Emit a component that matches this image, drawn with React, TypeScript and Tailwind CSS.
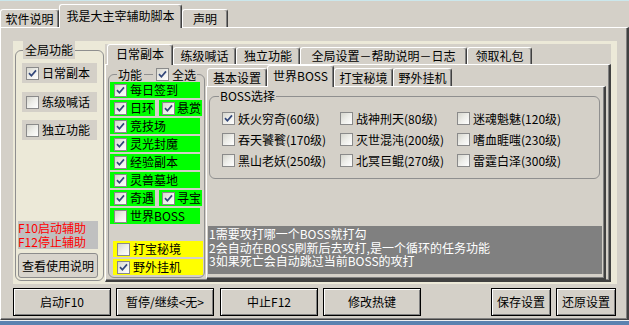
import React from "react";

const font = "font-['Noto_Sans_CJK_SC',sans-serif] text-[12px] leading-[14px]";

// classic sunken checkbox
const Check = ({ on }: { on?: boolean }) => (
  <span className="flex h-[13px] w-[13px] shrink-0 items-center justify-center border border-[#8a8a8a] bg-linear-to-br from-[#d6d6ce] via-[#eeeeea] to-white">
    {on && (
      <svg width="9" height="9" viewBox="0 0 9 9">
        <path d="M1 4.2 L3.4 6.8 L8 1.4" fill="none" stroke="#32477a" strokeWidth="1.7" />
      </svg>
    )}
  </span>
);

const Tab = ({ label, active, className }: { label: string; active?: boolean; className: string }) => (
  <div
    className={`${className} flex shrink-0 items-center justify-center whitespace-nowrap rounded-t-[3px] border-l border-t border-r border-white border-r-[#404040] bg-[#d4d0c8] shadow-[inset_-1px_0_0_#808080] ${
      active ? "relative z-10 -mb-px pb-[2px]" : ""
    }`}
  >
    {label}
  </div>
);

const panel =
  "border-l border-t border-r border-b border-white border-r-[#404040] border-b-[#404040] bg-[#d4d0c8] shadow-[inset_-1px_-1px_0_#808080]";

const Item = ({ label, on, className }: { label: string; on?: boolean; className: string }) => (
  <div className={`${className} flex h-[16px] items-center whitespace-nowrap`}>
    <Check on={on} />
    <span>{label}</span>
  </div>
);

const Btn = ({ label, className }: { label: string; className: string }) => (
  <div
    className={`${className} flex h-[28px] items-center justify-center border border-black bg-[#d4d0c8] shadow-[inset_1px_1px_0_#fff,inset_-1px_-1px_0_#808080]`}
  >
    {label}
  </div>
);

const bosses: [string, boolean][] = [
  ["妖火穷奇(60级)", true],
  ["战神刑天(80级)", false],
  ["迷魂魁魅(120级)", false],
  ["吞天饕餮(170级)", false],
  ["灭世混沌(200级)", false],
  ["嗜血睚嗤(230级)", false],
  ["黑山老妖(250级)", false],
  ["北冥巨鲲(270级)", false],
  ["雷霆白泽(300级)", false],
];

export default function App() {
  return (
    <div className={`${font} flex h-[325px] w-[629px] flex-col overflow-hidden bg-[#d4d0c8] text-black`}>
      <div className="h-px bg-[#cbe7ec]" />

      {/* outer tabs */}
      <div className="flex h-[26px] items-end">
        <Tab label="软件说明" className="h-[18px] w-[59px]" />
        <Tab label="我是大主宰辅助脚本" active className="h-[24px] w-[123px]" />
        <Tab label="声明" className="h-[18px] w-[46px]" />
      </div>

      <div className={`${panel} flex h-[293px] flex-col border-r-2 pl-[12px] pt-[13px]`}>
        <div className="flex h-[243px] w-[604px] bg-[#ece9d8] pl-[2px]">
          {/* 全局功能 */}
          <fieldset className="flex h-[240px] w-[89px] flex-col rounded-[6px] border border-[#8f8f8f]">
            <legend className="ml-[7px] h-[18px] bg-[#d4d0c8] px-[2px] leading-[18px]">全局功能</legend>
            <div className="ml-[6px] mt-[4px] flex h-[20px] w-[75px] items-center gap-[3px] bg-[#d4d0c8] pl-[4px]">
              <Check on />
              <span>日常副本</span>
            </div>
            <div className="ml-[6px] mt-[9px] flex h-[20px] w-[75px] items-center gap-[3px] bg-[#d4d0c8] pl-[4px]">
              <Check />
              <span>练级喊话</span>
            </div>
            <div className="ml-[6px] mt-[8px] flex h-[20px] w-[75px] items-center gap-[3px] bg-[#d4d0c8] pl-[4px]">
              <Check />
              <span>独立功能</span>
            </div>
            <div className="ml-[2px] mt-auto flex h-[28px] w-[80px] flex-col justify-center bg-[#c0c0c0] leading-[14px] text-[#ff0000]">
              <span>F10启动辅助</span>
              <span>F12停止辅助</span>
            </div>
            <div className="mb-[2px] ml-[2px] mt-[4px] flex h-[25px] w-[80px] items-center justify-center rounded-[3px] border border-[#8c8c8c] bg-[#d8d4cc]">
              查看使用说明
            </div>
          </fieldset>

          {/* 日常副本 tab control */}
          <div className="ml-px flex w-[506px] flex-col pt-[3px]">
            <div className="flex h-[20px] items-end bg-[#d4d0c8] pl-[2px]">
              <Tab label="日常副本" active className="h-[21px] w-[66px]" />
              <Tab label="练级喊话" className="h-[17px] w-[63px]" />
              <Tab label="独立功能" className="h-[17px] w-[64px]" />
              <Tab label="全局设置－帮助说明－日志" className="h-[17px] w-[167px]" />
              <Tab label="领取礼包" className="h-[17px] w-[65px]" />
            </div>
            <div className={`${panel} flex h-[218px] border-b-2 border-r-2`}>
              {/* 功能 */}
              <fieldset className="ml-[2px] mt-[2px] flex h-[211px] w-[97px] flex-col rounded-[6px] border border-[#8f8f8f]">
                <legend className="ml-[8px] h-[15px] px-px">
                  <span className="flex h-[15px] items-center">
                    <span>功能</span>
                    <span className="mx-[2px] h-px w-[9px] bg-[#8f8f8f]" />
                    <span className="flex items-center gap-[3px] pl-px">
                      <Check on />
                      <span>全选</span>
                    </span>
                  </span>
                </legend>
                <div className="flex flex-col gap-[2px] pl-px">
                  <Item label="每日签到" on className="w-[90px] gap-[3px] bg-[#00ff00] pl-[4px]" />
                  <div className="flex gap-[4px]">
                    <Item label="日环" on className="w-[45px] gap-[3px] bg-[#00ff00] pl-[4px]" />
                    <Item label="悬赏" on className="w-[43px] gap-[2px] bg-[#00ff00] pl-[3px]" />
                  </div>
                  <Item label="竞技场" on className="w-[90px] gap-[3px] bg-[#00ff00] pl-[4px]" />
                  <Item label="灵光封魔" on className="w-[90px] gap-[3px] bg-[#00ff00] pl-[4px]" />
                  <Item label="经验副本" on className="w-[90px] gap-[3px] bg-[#00ff00] pl-[4px]" />
                  <Item label="灵兽墓地" on className="w-[90px] gap-[3px] bg-[#00ff00] pl-[4px]" />
                  <div className="flex gap-[4px]">
                    <Item label="奇遇" on className="w-[45px] gap-[3px] bg-[#00ff00] pl-[4px]" />
                    <Item label="寻宝" on className="w-[43px] gap-[2px] bg-[#00ff00] pl-[3px]" />
                  </div>
                  <Item label="世界BOSS" className="w-[90px] gap-[3px] bg-[#00ff00] pl-[4px]" />
                </div>
                <div className="ml-[4px] mt-[17px] flex flex-col gap-[2px]">
                  <Item label="打宝秘境" className="w-[90px] gap-[3px] bg-[#ffff00] pl-[4px]" />
                  <Item label="野外挂机" on className="w-[90px] gap-[3px] bg-[#ffff00] pl-[4px]" />
                </div>
              </fieldset>

              {/* 世界BOSS tab control */}
              <div className="ml-px flex w-[400px] flex-col">
                <div className="flex h-[21px] items-end pl-px">
                  <Tab label="基本设置" className="h-[18px] w-[60px]" />
                  <Tab label="世界BOSS" active className="h-[22px] w-[67px]" />
                  <Tab label="打宝秘境" className="h-[18px] w-[59px]" />
                  <Tab label="野外挂机" className="h-[18px] w-[59px]" />
                </div>
                <div className={`${panel} flex h-[194px] flex-col border-b-2 border-r-2`}>
                  <fieldset className="ml-[2px] mt-[2px] h-[90px] w-[391px] rounded-[6px] border border-[#8f8f8f]">
                    <legend className="ml-[9px] h-[14px] px-px leading-[14px]">BOSS选择</legend>
                    <div className="grid grid-cols-[118px_117px_1fr] gap-y-[8px] pl-[12px] pt-[9px]">
                      {bosses.map(([name, on]) => (
                        <div key={name} className="flex h-[13px] items-center gap-[3px]">
                          <Check on={on} />
                          <span className="whitespace-nowrap">{name}</span>
                        </div>
                      ))}
                    </div>
                  </fieldset>
                  <div className="ml-px mt-[47px] h-[48px] w-[394px] bg-[#808080] pl-px pt-px leading-[13.5px] text-white">
                    <div>1需要攻打哪一个BOSS就打勾</div>
                    <div>2会自动在BOSS刷新后去攻打,是一个循环的任务功能</div>
                    <div>3如果死亡会自动跳过当前BOSS的攻打</div>
                  </div>
                </div>
              </div>
            </div>
          </div>
        </div>

        {/* bottom buttons */}
        <div className="mt-[4px] flex">
          <Btn label="启动F10" className="w-[98px]" />
          <Btn label={"暂停/继续<无>"} className="ml-[5px] w-[98px]" />
          <Btn label="中止F12" className="ml-[6px] w-[98px]" />
          <Btn label="修改热键" className="ml-[5px] w-[98px]" />
          <Btn label="保存设置" className="ml-[70px] w-[60px]" />
          <Btn label="还原设置" className="ml-[5px] w-[60px]" />
        </div>
      </div>

      <div className="h-px bg-[#eef0f2]" />
      <div className="h-[4px] bg-[#5a82b0]" />
    </div>
  );
}
